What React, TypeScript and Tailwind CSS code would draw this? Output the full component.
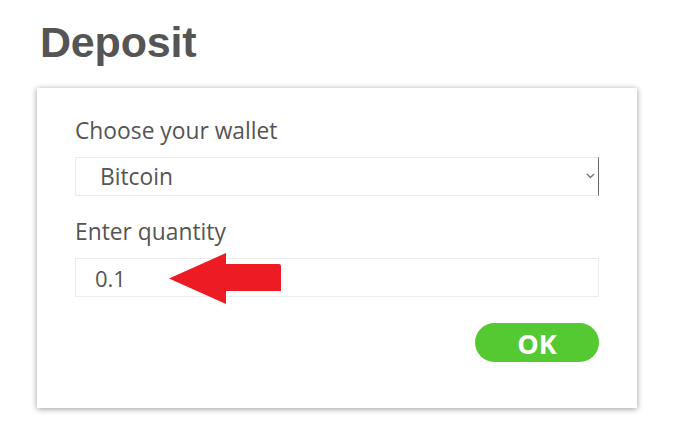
import { useState } from "react";

function Chevron() {
  return (
    <svg width="9" height="6" viewBox="0 0 9 6" className="text-[#777]">
      <path d="M1 1 L4.5 4.5 L8 1" fill="none" stroke="currentColor" strokeWidth="1.4" />
    </svg>
  );
}

function RedArrow() {
  return (
    <svg width="113" height="51" viewBox="0 0 113 51" className="block">
      <path
        d="M0 25.5 L57 0 L57 11 L110 11 Q112 11 112 13 L112 38 L57 38 L57 51 Z"
        fill="#ed1c24"
      />
    </svg>
  );
}

export default function App() {
  const [wallet, setWallet] = useState("Bitcoin");
  const [qty, setQty] = useState("0.1");

  return (
    <div className="w-[677px] h-[437px] bg-white text-[#555] font-['Open_Sans',sans-serif] overflow-hidden">
      <div className="pl-[37px] pt-[14px]">
        <h1 className="pl-[3px] font-['Liberation_Sans',Arial,sans-serif] font-bold text-[43px] leading-[56px] tracking-[-0.2px] text-[#555]">
          Deposit
        </h1>

        <div className="mt-[18px] w-[600px] h-[320px] bg-white shadow-[0_1px_6px_rgba(0,0,0,0.4)] px-[38px] pt-[28px] flex flex-col">
          <label className="text-[22.8px] leading-[30px]">Choose your wallet</label>
          <div className="relative mt-[11px]">
            <select
              value={wallet}
              onChange={(e) => setWallet(e.target.value)}
              className="appearance-none w-full h-[39px] border border-[#ececec] border-r-[#666] pl-[24px] text-[22.8px] leading-[37px] text-[#555] bg-white outline-none"
            >
              <option>Bitcoin</option>
              <option>Ethereum</option>
              <option>Litecoin</option>
            </select>
            <span className="absolute right-[4px] top-[16px] pointer-events-none">
              <Chevron />
            </span>
          </div>

          <label className="mt-[21px] text-[22.8px] leading-[30px]">Enter quantity</label>
          <div className="relative mt-[11px]">
            <input
              value={qty}
              onChange={(e) => setQty(e.target.value)}
              className="w-full h-[39px] border border-[#ececec] pl-[19px] text-[22px] text-[#555] outline-none"
            />
            <span className="absolute left-[94px] top-[-5px] pointer-events-none">
              <RedArrow />
            </span>
          </div>

          <div className="mt-[26px] flex justify-end">
            <button className="w-[124px] h-[39px] rounded-full bg-[#55c932] text-white font-bold text-[27px] leading-none pt-[1px]">
              OK
            </button>
          </div>
        </div>
      </div>
    </div>
  );
}
